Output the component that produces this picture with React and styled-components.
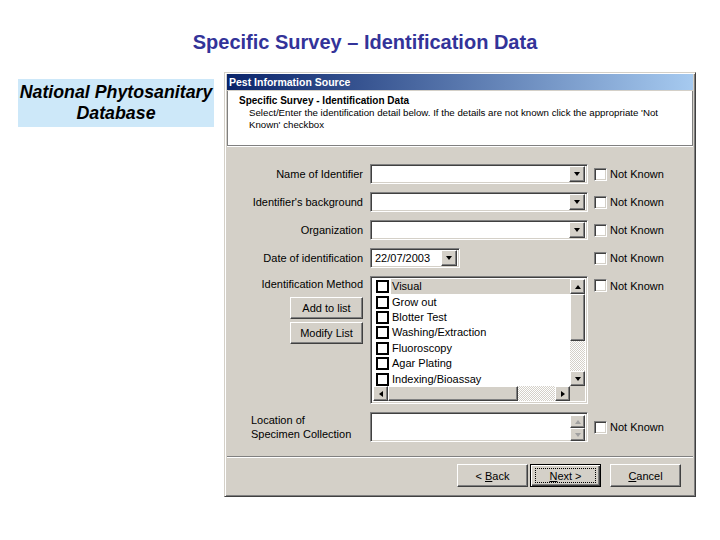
import styled, { createGlobalStyle, css } from "styled-components";

const GlobalStyle = createGlobalStyle`
  body {
    margin: 0;
    background: #ffffff;
  }
`

const raised = css`
  background-color: #d4d0c8;
  border: 1px solid;
  border-color: #ffffff #404040 #404040 #ffffff;
  box-shadow: inset -1px -1px #808080;
`
const sunken = css`
  background-color: #ffffff;
  border: 1px solid;
  border-color: #808080 #ffffff #ffffff #808080;
  box-shadow: inset 1px 1px #404040, inset -1px -1px #d4d0c8;
`
const dither = css`
  background-image: repeating-conic-gradient(#d4d0c8 0 25%, #ffffff 0 50%);
  background-size: 2px 2px;
`

const Page = styled.div`
  width: 720px;
  height: 540px;
  padding-top: 30px;
  box-sizing: border-box;
  font-family: "Liberation Sans", Arial, sans-serif;
`
const PageTitle = styled.h1`
  margin: 0;
  padding-left: 10px;
  font: bold 20px/24px "Liberation Sans", Arial, sans-serif;
  color: #333399;
  text-align: center;
`
const Content = styled.div`
  display: flex;
  align-items: flex-start;
  gap: 10px;
  margin-top: 18px;
  padding-left: 18px;
`
const SideBox = styled.div`
  width: 196px;
  height: 48px;
  margin-top: 7px;
  background-color: #cde8f9;
  font: italic bold 17.8px/21px "Liberation Sans", Arial, sans-serif;
  color: #000;
  text-align: center;
  white-space: nowrap;
  display: flex;
  flex-direction: column;
  justify-content: center;
`
const Dialog = styled.div`
  width: 472px;
  height: 425px;
  box-sizing: border-box;
  padding: 1px 2px 2px;
  background-color: #d4d0c8;
  border: 1px solid;
  border-color: #d4d0c8 #404040 #404040 #d4d0c8;
  box-shadow: inset 1px 1px #ffffff, inset -1px -1px #808080;
  display: flex;
  flex-direction: column;
  font-size: 11px;
  color: #000;
`
const TitleBar = styled.div`
  height: 16px;
  padding-left: 2px;
  background: linear-gradient(to right, #0a246a, #a6caf0);
  color: #ffffff;
  font: bold 10.5px/16px "Liberation Sans", Arial, sans-serif;
`
const Header = styled.div`
  height: 55px;
  margin-top: 1px;
  padding: 3px 0 0 11px;
  box-sizing: border-box;
  background: #ffffff;
  border: 1px solid #808080;
  border-top: none;
  box-shadow: 0 1px #ffffff;
`
const HeaderTitle = styled.div`
  font: bold 10px/13px "Liberation Sans", Arial, sans-serif;
`
const HeaderText = styled.div`
  margin-left: 10px;
  font: 9.7px/12px "Liberation Sans", Arial, sans-serif;
`
const Form = styled.div`
  flex: 1;
  padding-top: 18px;
  display: grid;
  grid-template-columns: 136px 218px 1fr;
  column-gap: 7px;
  row-gap: 8px;
  align-content: start;
  align-items: center;
`
const Label = styled.div`
  justify-self: ${p => (p.$left ? "start" : "end")};
  padding-left: ${p => (p.$left ? "24px" : "0")};
  font-size: 11px;
  line-height: 14px;
  white-space: nowrap;
`
const LabelStack = styled.div`
  align-self: start;
  display: flex;
  flex-direction: column;
  align-items: flex-end;
  gap: 3px;
  padding-top: 1px;
`
const Combo = styled.div`
  ${sunken};
  width: ${p => p.$width || 218}px;
  height: 20px;
  box-sizing: border-box;
  padding: 2px;
  display: flex;
  align-items: center;
  justify-content: space-between;
`
const ComboText = styled.span`
  padding-left: 2px;
  font-size: 11px;
`
const DropButton = styled.div`
  ${raised};
  width: 16px;
  height: 16px;
  box-sizing: border-box;
  display: flex;
  align-items: center;
  justify-content: center;
`
const Arrow = styled.span`
  width: 0;
  height: 0;
  border: 0 solid transparent;
  ${p => p.$dir === "down" && css`
    border-width: 4px 3.5px 0;
    border-top-color: ${p.$color};
  `}
  ${p => p.$dir === "up" && css`
    border-width: 0 3.5px 4px;
    border-bottom-color: ${p.$color};
  `}
  ${p => p.$dir === "left" && css`
    border-width: 3.5px 4px 3.5px 0;
    border-right-color: ${p.$color};
  `}
  ${p => p.$dir === "right" && css`
    border-width: 3.5px 0 3.5px 4px;
    border-left-color: ${p.$color};
  `}
`
const CheckCell = styled.label`
  align-self: ${p => (p.$top ? "start" : "center")};
  margin-top: ${p => (p.$top ? "3px" : "0")};
  margin-left: -1px;
  display: flex;
  align-items: center;
  gap: 3px;
  font-size: 11px;
  white-space: nowrap;
`
const CheckBox = styled.span`
  ${sunken};
  width: 13px;
  height: 13px;
  box-sizing: border-box;
`
const SmallButton = styled.div`
  ${raised};
  width: 73px;
  height: 22px;
  box-sizing: border-box;
  display: flex;
  align-items: center;
  justify-content: center;
  font-size: 11px;
  margin-top: ${p => p.$first ? "3px" : "0"};
`
const ListBox = styled.div`
  ${sunken};
  width: 218px;
  height: 128px;
  box-sizing: border-box;
  padding: 2px;
  display: grid;
  grid-template-columns: 1fr 15px;
  grid-template-rows: 1fr 15px;
`
const Items = styled.div`
  overflow: hidden;
`
const Item = styled.div`
  height: 15.4px;
  display: flex;
  align-items: center;
  padding-left: 3px;
  white-space: nowrap;
`
const ItemBox = styled.span`
  width: 13px;
  height: 13px;
  box-sizing: border-box;
  border: 2px solid #000;
  background: #fff;
  flex-shrink: 0;
`
const ItemText = styled.span`
  flex: 1;
  margin-left: 2px;
  padding-left: 1px;
  font-size: 11px;
  line-height: 15px;
  background: ${p => (p.$selected ? "#d4d0c8" : "transparent")};
`
const VScroll = styled.div`
  flex: 0 0 15px;
  display: flex;
  flex-direction: column;
  background: #d4d0c8;
`
const HScroll = styled.div`
  display: flex;
  background: #d4d0c8;
`
const ScrollButton = styled.div`
  ${raised};
  flex: 0 0 ${p => p.$size || 15}px;
  box-sizing: border-box;
  display: flex;
  align-items: center;
  justify-content: center;
`
const Thumb = styled.div`
  ${raised};
  flex: 0 0 ${p => p.$size}px;
  box-sizing: border-box;
`
const Track = styled.div`
  flex: 1;
  ${dither};
`
const Corner = styled.div`
  background: #d4d0c8;
`
const TextArea = styled.div`
  ${sunken};
  width: 218px;
  height: 30px;
  box-sizing: border-box;
  padding: 2px;
  display: flex;
  justify-content: flex-end;
`
const Footer = styled.div`
  height: 38px;
  box-sizing: border-box;
  border-top: 1px solid #808080;
  box-shadow: inset 0 1px #ffffff;
  padding: 7px 12px 0 0;
  display: flex;
  justify-content: flex-end;
`
const WizardButton = styled.div`
  ${raised};
  width: 71px;
  height: 23px;
  box-sizing: border-box;
  margin-left: ${p => p.$gap || 0}px;
  display: flex;
  align-items: center;
  justify-content: center;
  font-size: 11px;
  white-space: pre;
  ${p => p.$default && css`
    border-color: #000;
    box-shadow: inset 1px 1px #ffffff, inset -1px -1px #404040, inset -2px -2px #808080;
  `}
`
const FocusRing = styled.span`
  width: 61px;
  height: 15px;
  border: 1px dotted #000;
  box-sizing: border-box;
  display: flex;
  align-items: center;
  justify-content: center;
  white-space: pre;
`

const methods = [
  "Visual",
  "Grow out",
  "Blotter Test",
  "Washing/Extraction",
  "Fluoroscopy",
  "Agar Plating",
  "Indexing/Bioassay",
  "Serological test - ELISA",
]

function NotKnown({ top }) {
  return (
    <CheckCell $top={top}>
      <CheckBox />
      Not Known
    </CheckCell>
  )
}

function ComboBox({ width, value }) {
  return (
    <Combo $width={width}>
      <ComboText>{value}</ComboText>
      <DropButton><Arrow $dir="down" $color="#000" /></DropButton>
    </Combo>
  )
}

export default function App() {
  return (
    <Page>
      <GlobalStyle />
      <PageTitle>Specific Survey – Identification Data</PageTitle>
      <Content>
        <SideBox>
          <div>National Phytosanitary</div>
          <div>Database</div>
        </SideBox>
        <Dialog>
          <TitleBar>Pest Information Source</TitleBar>
          <Header>
            <HeaderTitle>Specific Survey - Identification Data</HeaderTitle>
            <HeaderText>
              Select/Enter the identification detail below. If the details are not known click the appropriate 'Not
              <br />
              Known' checkbox
            </HeaderText>
          </Header>
          <Form>
            <Label>Name of Identifier</Label>
            <ComboBox />
            <NotKnown />

            <Label>Identifier's background</Label>
            <ComboBox />
            <NotKnown />

            <Label>Organization</Label>
            <ComboBox />
            <NotKnown />

            <Label>Date of identification</Label>
            <ComboBox width={90} value="22/07/2003" />
            <NotKnown />

            <LabelStack>
              <Label>Identification Method</Label>
              <SmallButton $first>Add to list</SmallButton>
              <SmallButton>Modify List</SmallButton>
            </LabelStack>
            <ListBox>
              <Items>
                {methods.map((m, i) => (
                  <Item key={m}>
                    <ItemBox />
                    <ItemText $selected={i === 0}>{m}</ItemText>
                  </Item>
                ))}
              </Items>
              <VScroll>
                <ScrollButton><Arrow $dir="up" $color="#000" /></ScrollButton>
                <Thumb $size={47} />
                <Track />
                <ScrollButton><Arrow $dir="down" $color="#000" /></ScrollButton>
              </VScroll>
              <HScroll>
                <ScrollButton><Arrow $dir="left" $color="#000" /></ScrollButton>
                <Thumb $size={130} />
                <Track />
                <ScrollButton><Arrow $dir="right" $color="#000" /></ScrollButton>
              </HScroll>
              <Corner />
            </ListBox>
            <NotKnown top />

            <Label $left>
              Location of
              <br />
              Specimen Collection
            </Label>
            <TextArea>
              <VScroll>
                <ScrollButton $size={13}><Arrow $dir="up" $color="#a0a0a0" /></ScrollButton>
                <ScrollButton $size={13}><Arrow $dir="down" $color="#a0a0a0" /></ScrollButton>
              </VScroll>
            </TextArea>
            <NotKnown />
          </Form>
          <Footer>
            <WizardButton>{"< "}<u>B</u>ack</WizardButton>
            <WizardButton $default $gap={2}>
              <FocusRing><u>N</u>{"ext >"}</FocusRing>
            </WizardButton>
            <WizardButton $gap={9}><u>C</u>ancel</WizardButton>
          </Footer>
        </Dialog>
      </Content>
    </Page>
  )
}
